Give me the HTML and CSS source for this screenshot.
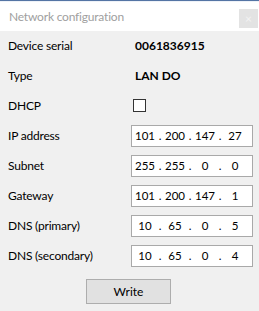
FILE: index.html
```html
<!DOCTYPE html>
<html lang="en">
<head>
    <meta charset="UTF-8">
    <title>Network configuration</title>
    <link rel="stylesheet" href="styles.css">
</head>
<body>
    <div class="window">
        <!--title bar-->
        <div class="title-bar">
            <span class="title">Network configuration</span>
            <span class="close">&times;</span>
        </div>
        <!--settings-->
        <div class="form">
            <div class="row">
                <span class="label">Device serial</span>
                <span class="value">0061836915</span>
            </div>
            <div class="row">
                <span class="label">Type</span>
                <span class="value">LAN DO</span>
            </div>
            <div class="row">
                <span class="label">DHCP</span>
                <span class="check"></span>
            </div>
            <div class="row">
                <span class="label">IP address</span>
                <div class="ip"><span>101</span><i>.</i><span>200</span><i>.</i><span>147</span><i>.</i><span>27</span></div>
            </div>
            <div class="row">
                <span class="label">Subnet</span>
                <div class="ip"><span>255</span><i>.</i><span>255</span><i>.</i><span>0</span><i>.</i><span>0</span></div>
            </div>
            <div class="row">
                <span class="label">Gateway</span>
                <div class="ip"><span>101</span><i>.</i><span>200</span><i>.</i><span>147</span><i>.</i><span>1</span></div>
            </div>
            <div class="row">
                <span class="label">DNS (primary)</span>
                <div class="ip"><span>10</span><i>.</i><span>65</span><i>.</i><span>0</span><i>.</i><span>5</span></div>
            </div>
            <div class="row">
                <span class="label">DNS (secondary)</span>
                <div class="ip"><span>10</span><i>.</i><span>65</span><i>.</i><span>0</span><i>.</i><span>4</span></div>
            </div>
        </div>
        <div class="actions">
            <button class="btn">Write</button>
        </div>
    </div>
</body>
</html>
```

FILE: styles.css
```css
/**page**/
html,body{
    margin: 0;
    background-color: #f0f0f0;
}
.window{
    width: 259px;
    height: 311px;
    font-family: Lato, "Noto Sans", sans-serif;
    font-size: 12px;
    letter-spacing: -0.2px;
    color: #000;
    border-top: 1px solid #5474a4;
}
/**title bar**/
.title-bar{
    display: flex;
    align-items: flex-start;
    justify-content: space-between;
    height: 28px;
    padding-top: 1px;
    background-color: #fff;
    border-top: 1px solid #eef2f8;
}
.title{
    margin: 6px 0 0 9px;
    color: #a0a0a0;
}
.close{
    width: 19px;
    height: 19px;
    margin: 6px 1px 0 0;
    background-color: #e3e3e3;
    color: #f3f3f3;
    line-height: 19px;
    text-align: center;
}
/**rows**/
.form{
    display: flex;
    flex-direction: column;
}
.row{
    display: flex;
    align-items: center;
    height: 30px;
    padding-left: 8px;
    padding-bottom: 1px;
    box-sizing: border-box;
}
.label{
    width: 123px;
    flex: none;
}
.value{
    margin-left: 4px;
    font-weight: bold;
    letter-spacing: 0;
}
.check{
    width: 11px;
    height: 11px;
    margin-left: 2px;
    border: 1px solid #333;
    background-color: #fff;
}
/**ip fields**/
.ip{
    display: flex;
    align-items: center;
    width: 118px;
    height: 20px;
    padding-left: 2px;
    border: 1px solid #a9a9a9;
    background-color: #fff;
    font-size: 11.5px;
    letter-spacing: 0;
}
.ip span{
    width: 22px;
    text-align: center;
}
.ip i{
    width: 8px;
    font-style: normal;
    text-align: center;
}
/**button**/
.actions{
    display: flex;
    justify-content: center;
    padding-top: 8px;
}
.btn{
    width: 85px;
    height: 25px;
    margin-left: -2px;
    padding: 0;
    border: 1px solid #adadad;
    background-color: #e1e1e1;
    font-family: inherit;
    font-size: 12px;
    color: #000;
}
```
